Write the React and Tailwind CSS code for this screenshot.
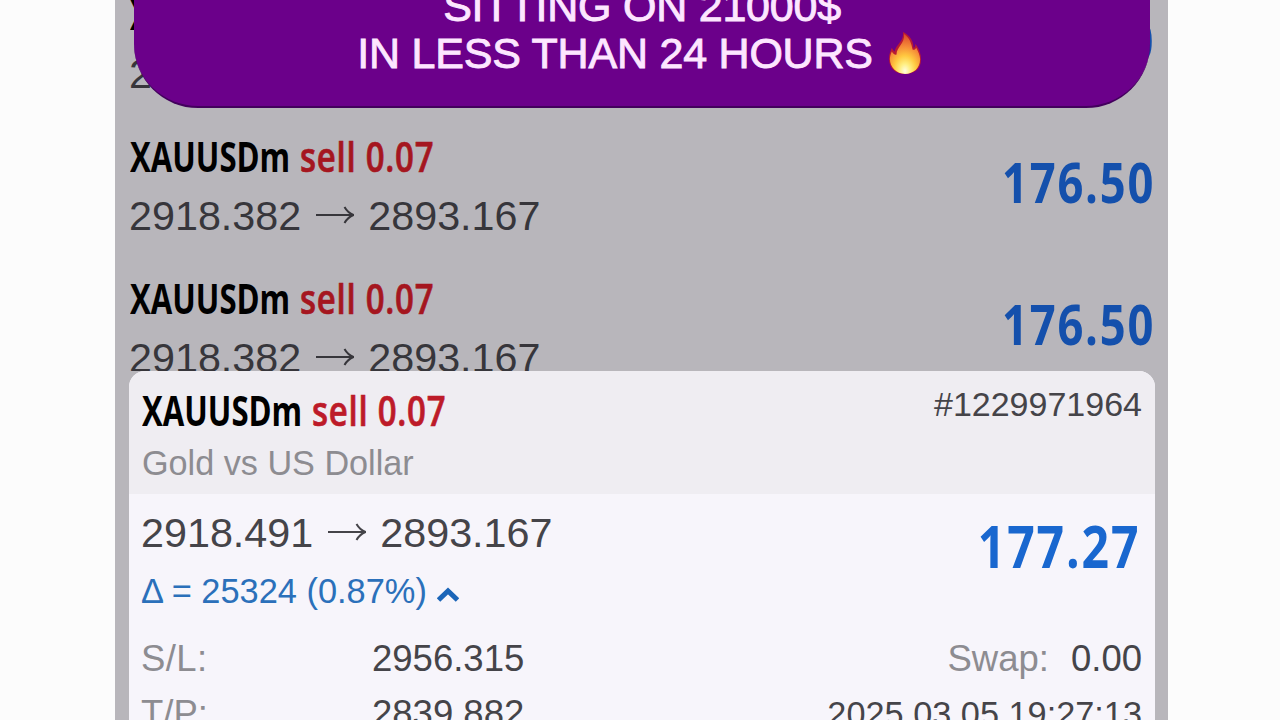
import React from "react";

function Arrow() {
  return (
    <svg className="mr-[14px] ml-[15px] h-[24px] w-[38px] shrink-0" viewBox="0 0 38 24" fill="none" stroke="currentColor" strokeWidth="2">
      <path d="M0 11H37M28.5 3C30.5 6.5 33.5 9.5 37.5 11C33.5 12.5 30.5 15.5 28.5 19" />
    </svg>
  );
}

function Title({ red }) {
  return (
    <div className="flex h-[59px] items-center pl-[1px] font-['Open_Sans',sans-serif] text-[41px] leading-[60px] font-bold whitespace-pre">
      <span className="w-[170px] text-black">
        <span className="inline-block origin-left scale-x-[0.76]">XAUUSDm</span>
      </span>
      <span className={red}>
        <span className="inline-block origin-left scale-x-[0.805] tracking-[0.9px] font-semibold [-webkit-text-stroke:0.7px_currentColor]">sell 0.07</span>
      </span>
    </div>
  );
}

function Prices({ from, to }) {
  return (
    <div className="flex h-[62px] items-center text-[41.3px] leading-[62px]">
      <span>{from}</span>
      <Arrow />
      <span>{to}</span>
    </div>
  );
}

function Position() {
  return (
    <div className="flex h-[142px] shrink-0 justify-between pr-[14px] pl-[14px] text-[#37363b]">
      <div>
        <Title red="text-[#a5161f]" />
        <Prices from="2918.382" to="2893.167" />
      </div>
      <div className="pt-[17px] font-['Open_Sans',sans-serif] text-[56px] leading-[76px] font-bold text-[#1450ac]">
        <span className="-mr-[1px] inline-block origin-right scale-x-[0.81] tracking-[2.2px]">176.50</span>
      </div>
    </div>
  );
}

function Flame() {
  return (
    <svg className="h-[43px] w-[34px] shrink-0" viewBox="0 0 36 44" preserveAspectRatio="none">
      <defs>
        <radialGradient id="flame" cx="0.5" cy="0.92" r="0.9">
          <stop offset="0" stopColor="#fffde0" />
          <stop offset="0.2" stopColor="#ffee80" />
          <stop offset="0.42" stopColor="#ffc840" />
          <stop offset="0.68" stopColor="#f58a38" />
          <stop offset="1" stopColor="#dc4a2c" />
        </radialGradient>
      </defs>
      <path fill="#b81a34" d="M16 0C24 4 27 10 27 16C29 16 29 13 29 12C33 17 35 23 35 28C35 38 28 43 18 43C8 43 1 37 1 27C1 22 3 19 4 16C5 18 6 19 7 20C8 13 17 10 16 0Z" />
      <path fill="url(#flame)" d="M17 2C23 6 25 12 26 18C28 19 29 17 30 16C32 20 34 24 34 28C34 37 27 43 18 43C9 43 2 36 2 28C2 25 3 22 4 20C6 23 8 24 9 23C9 15 18 12 17 2Z" />
    </svg>
  );
}

export default function App() {
  return (
    <div className="relative flex h-[720px] w-[1280px] justify-center overflow-hidden bg-[#fcfcfc] font-['Liberation_Sans',Arial,sans-serif]">
      <main className="ml-[3px] h-[720px] w-[1053px] overflow-hidden bg-[#b8b6bb]">
        <div className="flex h-[371px] flex-col overflow-hidden">
          <div className="-mt-[16px]">
            <Position />
          </div>
          <Position />
          <Position />
        </div>
        <section className="ml-[14px] h-[360px] w-[1026px] overflow-hidden rounded-t-[16px] bg-[#f7f5fb] text-[#454449]">
          <header className="flex h-[123px] justify-between bg-[#efedf2] pr-[13px] pl-[12px]">
            <div className="pt-[9px]">
              <Title red="text-[#bd1b29]" />
              <div className="pl-[1px] text-[34.2px] leading-[48px] text-[#8d8c91]">Gold vs US Dollar</div>
            </div>
            <div className="pt-[13px] text-[34px] leading-[40px]">#1229971964</div>
          </header>
          <div className="flex h-[126px] justify-between pr-[16px] pl-[12px]">
            <div className="pt-[8px]">
              <Prices from="2918.491" to="2893.167" />
              <div className="flex h-[54px] items-center text-[34.4px] leading-[54px] text-[#2b70ba]">
                <span>Δ = 25324 (0.87%)</span>
                <svg className="mt-[6px] ml-[10px] h-[16px] w-[22px]" viewBox="0 0 22 16" fill="none" stroke="#1b65b8" strokeWidth="5">
                  <path d="M1.5 14L11 5L20.5 14" />
                </svg>
              </div>
            </div>
            <div className="pt-[13px] font-['Open_Sans',sans-serif] text-[59px] leading-[76px] font-bold text-[#1967cf]">
              <span className="-mr-[1px] inline-block origin-right scale-x-[0.815] tracking-[2.3px]">177.27</span>
            </div>
          </div>
          <div className="flex flex-col pt-[11px] pr-[13px] pl-[12px] text-[36.5px] leading-[56px]">
            <div className="flex h-[55px]">
              <span className="w-[231px] tracking-[0.4px] text-[#8d8c91]">S/L:</span>
              <span>2956.315</span>
              <span className="ml-auto text-[#8d8c91]">Swap:</span>
              <span className="ml-[22px] text-[36.5px]">0.00</span>
            </div>
            <div className="flex h-[55px]">
              <span className="w-[231px] text-[#8d8c91]">T/P:</span>
              <span>2839.882</span>
              <span className="ml-auto text-[34.3px]">2025.03.05 19:27:13</span>
            </div>
          </div>
        </section>
      </main>
      <div className="absolute -top-[60px] left-[134px] flex h-[168px] w-[1016px] flex-col items-center justify-end rounded-b-[64px] border-b-2 border-[#43005d] bg-[#6b008a] pb-[28px] text-[43px] leading-[50px] tracking-[-0.22px] text-[#fde6ff] [-webkit-text-stroke:0.9px_#fde6ff]">
        <div className="h-[47px] whitespace-nowrap">SITTING ON 21000$</div>
        <div className="flex h-[50px] items-center pr-[5px] whitespace-nowrap">
          <span>IN LESS THAN 24 HOURS</span>
          <span className="ml-[15px]">
            <Flame />
          </span>
        </div>
      </div>
    </div>
  );
}
